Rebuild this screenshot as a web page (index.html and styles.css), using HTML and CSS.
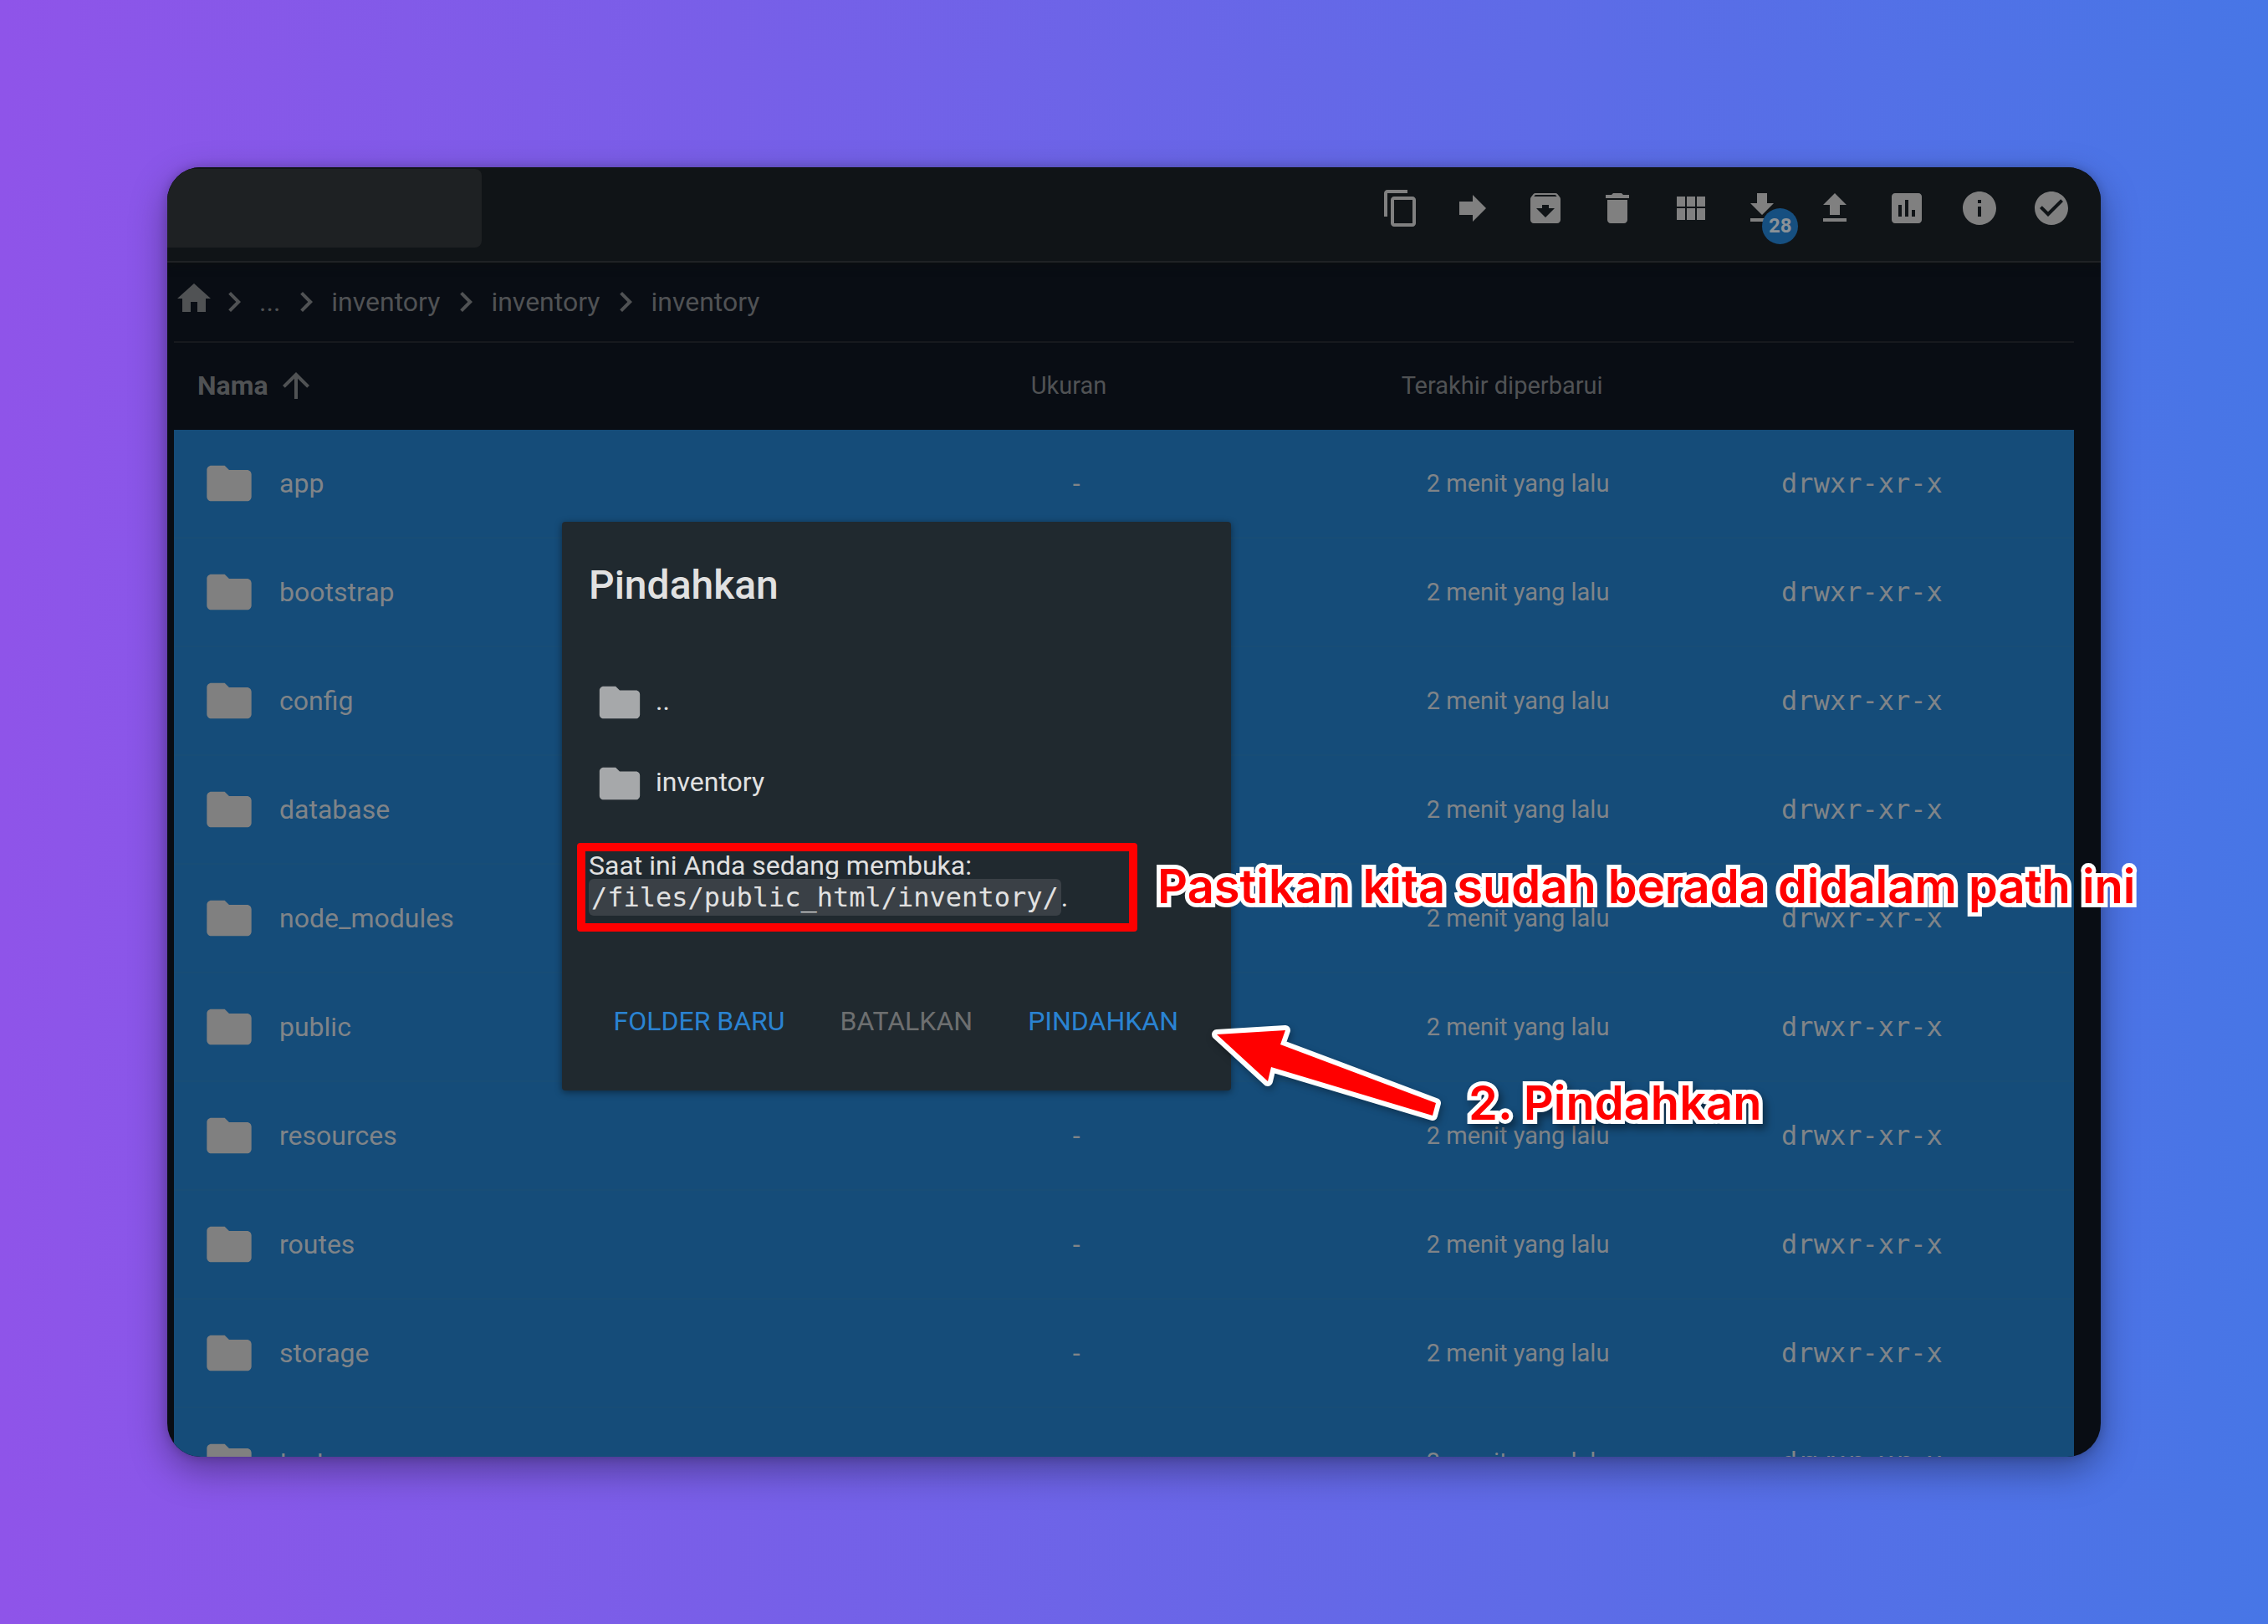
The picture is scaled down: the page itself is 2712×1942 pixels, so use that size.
FILE: index.html
```html
<!DOCTYPE html>
<html lang="id">
<head>
<meta charset="utf-8">
<title>Pindahkan</title>
<link rel="stylesheet" href="styles.css">
</head>
<body>
<svg class="sprite" aria-hidden="true">
  <symbol id="folder" viewBox="0 0 24 24"><path d="M10 4H4c-1.1 0-1.99.9-1.99 2L2 18c0 1.100.9 2 2 2h16c1.100 0 2-.9 2-2V8c0-1.100-.9-2-2-2h-8l-2-2z"/></symbol>
  <symbol id="chevron" viewBox="0 0 24 24"><path d="M10 6L8.59 7.410 13.170 12l-4.580 4.590L10 18l6-6z"/></symbol>
</svg>
<main class="stage">
  <section class="window">
    <header class="toolbar">
      <input class="search" type="text" aria-label="Cari">
      <nav class="actions">
        <button class="action" aria-label="Salin"><svg viewBox="0 0 24 24"><path d="M16 1H4c-1.100 0-2 .9-2 2v14h2V3h12V1zm3 4H8c-1.100 0-2 .9-2 2v14c0 1.100.9 2 2 2h11c1.100 0 2-.9 2-2V7c0-1.100-.9-2-2-2zm0 16H8V7h11v14z"/></svg></button>
        <button class="action" aria-label="Pindah"><svg viewBox="0 0 24 24"><path d="M12 8V4l8 8-8 8v-4H4V8z"/></svg></button>
        <button class="action" aria-label="Arsip"><svg viewBox="0 0 24 24"><path d="M20.540 5.230l-1.390-1.680C18.880 3.210 18.470 3 18 3H6c-.47 0-.88.21-1.160.55L3.460 5.230C3.170 5.570 3 6.020 3 6.500V19c0 1.100.9 2 2 2h14c1.100 0 2-.9 2-2V6.500c0-.48-.17-.93-.46-1.270zM12 17.500L6.500 12H10v-2h4v2h3.500L12 17.500zM5.120 5l.81-1h12l.94 1H5.120z"/></svg></button>
        <button class="action" aria-label="Hapus"><svg viewBox="0 0 24 24"><path d="M6 19c0 1.100.9 2 2 2h8c1.100 0 2-.9 2-2V7H6v12zM19 4h-3.500l-1-1h-5l-1 1H5v2h14V4z"/></svg></button>
        <button class="action" aria-label="Tampilan"><svg viewBox="0 0 24 24"><path d="M4 11h5V5H4v6zm0 8h5v-7H4v7zm6 0h5v-7h-5v7zm6 0h5v-7h-5v7zm-6-8h5V5h-5v6zm6-6v6h5V5h-5z"/></svg></button>
        <button class="action" aria-label="Unduh"><svg viewBox="0 0 24 24"><path d="M19 9h-4V3H9v6H5l7 7 7-7zM5 18v2h14v-2H5z"/></svg><span class="badge">28</span></button>
        <button class="action" aria-label="Unggah"><svg viewBox="0 0 24 24"><path d="M9 16h6v-6h4l-7-7-7 7h4zm-4 2h14v2H5z"/></svg></button>
        <button class="action" aria-label="Statistik"><svg viewBox="0 0 24 24"><path d="M19 3H5c-1.100 0-2 .9-2 2v14c0 1.100.9 2 2 2h14c1.100 0 2-.9 2-2V5c0-1.100-.9-2-2-2zM9 17H7v-7h2v7zm4 0h-2V7h2v10zm4 0h-2v-4h2v4z"/></svg></button>
        <button class="action" aria-label="Info"><svg viewBox="0 0 24 24"><path d="M12 2C6.480 2 2 6.480 2 12s4.480 10 10 10 10-4.480 10-10S17.520 2 12 2zm1 15h-2v-6h2v6zm0-8h-2V7h2v2z"/></svg></button>
        <button class="action" aria-label="Pilih"><svg viewBox="0 0 24 24"><path d="M12 2C6.480 2 2 6.480 2 12s4.480 10 10 10 10-4.480 10-10S17.520 2 12 2zm-2 15l-5-5 1.410-1.410L10 14.170l7.590-7.590L19 8l-9 9z"/></svg></button>
      </nav>
    </header>
    <div class="content">
      <nav class="breadcrumbs">
        <a class="home" href="#" aria-label="Beranda"><svg viewBox="0 0 24 24"><path d="M10 20v-6h4v6h5v-8h3L12 3 2 12h3v8z"/></svg></a>
        <svg><use href="#chevron"/></svg><a class="crumb" href="#">...</a>
        <svg><use href="#chevron"/></svg><a class="crumb" href="#">inventory</a>
        <svg><use href="#chevron"/></svg><a class="crumb" href="#">inventory</a>
        <svg><use href="#chevron"/></svg><a class="crumb" href="#">inventory</a>
      </nav>
      <table class="files">
        <thead>
          <tr>
            <th class="name"><span class="sort">Nama <svg viewBox="0 0 24 24"><path d="M4 12l1.410 1.410L11 7.830V20h2V7.830l5.580 5.590L20 12l-8-8-8 8z"/></svg></span></th>
            <th class="size">Ukuran</th>
            <th class="updated">Terakhir diperbarui</th>
            <th class="mode"></th>
          </tr>
        </thead>
        <tbody>
          <tr><td><span class="file"><svg><use href="#folder"/></svg>app</span></td><td class="size">-</td><td class="updated">2 menit yang lalu</td><td class="mode">drwxr-xr-x</td></tr>
          <tr><td><span class="file"><svg><use href="#folder"/></svg>bootstrap</span></td><td class="size">-</td><td class="updated">2 menit yang lalu</td><td class="mode">drwxr-xr-x</td></tr>
          <tr><td><span class="file"><svg><use href="#folder"/></svg>config</span></td><td class="size">-</td><td class="updated">2 menit yang lalu</td><td class="mode">drwxr-xr-x</td></tr>
          <tr><td><span class="file"><svg><use href="#folder"/></svg>database</span></td><td class="size">-</td><td class="updated">2 menit yang lalu</td><td class="mode">drwxr-xr-x</td></tr>
          <tr><td><span class="file"><svg><use href="#folder"/></svg>node_modules</span></td><td class="size">-</td><td class="updated">2 menit yang lalu</td><td class="mode">drwxr-xr-x</td></tr>
          <tr><td><span class="file"><svg><use href="#folder"/></svg>public</span></td><td class="size">-</td><td class="updated">2 menit yang lalu</td><td class="mode">drwxr-xr-x</td></tr>
          <tr><td><span class="file"><svg><use href="#folder"/></svg>resources</span></td><td class="size">-</td><td class="updated">2 menit yang lalu</td><td class="mode">drwxr-xr-x</td></tr>
          <tr><td><span class="file"><svg><use href="#folder"/></svg>routes</span></td><td class="size">-</td><td class="updated">2 menit yang lalu</td><td class="mode">drwxr-xr-x</td></tr>
          <tr><td><span class="file"><svg><use href="#folder"/></svg>storage</span></td><td class="size">-</td><td class="updated">2 menit yang lalu</td><td class="mode">drwxr-xr-x</td></tr>
          <tr><td><span class="file"><svg><use href="#folder"/></svg>tests</span></td><td class="size">-</td><td class="updated">2 menit yang lalu</td><td class="mode">drwxr-xr-x</td></tr>
        </tbody>
      </table>
    </div>
  </section>

  <section class="dialog" role="dialog" aria-labelledby="dialog-title">
    <h2 class="dialog-title" id="dialog-title">Pindahkan</h2>
    <ul class="folders">
      <li class="folder"><svg><use href="#folder"/></svg><span class="folder-name">..</span></li>
      <li class="folder"><svg><use href="#folder"/></svg><span class="folder-name">inventory</span></li>
    </ul>
    <p class="location">Saat ini Anda sedang membuka: <code>/files/public_html/inventory/</code>.</p>
    <div class="dialog-actions">
      <button class="flat">FOLDER BARU</button>
      <button class="flat muted">BATALKAN</button>
      <button class="flat">PINDAHKAN</button>
    </div>
    <div class="frame"></div>
    <p class="note note-path">Pastikan kita sudah berada didalam path ini</p>
    <svg class="arrow" viewBox="0 0 290 130"><path d="M15 17L97 12L91 29L277 99L273 114L80 56L76 73Z"/></svg>
    <p class="note note-move">2. Pindahkan</p>
  </section>
</main>
</body>
</html>
```
FILE: styles.css
```css
* {
  box-sizing: border-box;
}

body {
  margin: 0;
  background: linear-gradient(90deg, #8f54e9, #4776e6);
  font-family: Roboto, "Liberation Sans", sans-serif;
  font-size: 32px;
  color: #808488;
}

button {
  padding: 0;
  border: 0;
  background: none;
  font: inherit;
}

a {
  color: inherit;
  text-decoration: none;
}

svg {
  display: block;
  flex: none;
  fill: currentColor;
}

.sprite {
  position: absolute;
  width: 0;
  height: 0;
}

.stage {
  position: relative;
  height: 100vh;
  padding: 200px;
  overflow: hidden;
}

/* File manager window */

.window {
  height: 100%;
  overflow: hidden;
  border-radius: 40px;
  background: #090d14;
  box-shadow: 0 16px 44px rgba(0, 0, 0, 0.35), 0 0 12px rgba(0, 0, 0, 0.2);
}

.toolbar {
  display: flex;
  justify-content: space-between;
  height: 114px;
  padding: 2px 35px 16px 0;
  border-bottom: 2px solid #202225;
  background: #101417;
  box-shadow: 0 2px 10px #0c0f10;
}

.search {
  width: 376px;
  height: 94px;
  border: 0;
  border-radius: 0 8px 8px 0;
  background: #1e2123;
}

.actions {
  display: flex;
  align-items: center;
  justify-content: space-between;
  width: 826px;
}

.action {
  position: relative;
  width: 48px;
  height: 48px;
  color: #808080;
}

.action svg {
  width: 48px;
  height: 48px;
}

.badge {
  position: absolute;
  top: 24px;
  left: 24px;
  width: 43px;
  height: 43px;
  border-radius: 50%;
  background: #164f80;
  color: #8b9298;
  font-size: 24px;
  font-weight: 700;
  line-height: 43px;
  text-align: center;
}

.content {
  padding: 0 32px 0 8px;
}

.breadcrumbs {
  display: flex;
  align-items: center;
  height: 96px;
  border-bottom: 2px solid #17191e;
  color: #505254;
}

.breadcrumbs svg {
  width: 48px;
  height: 48px;
}

.home {
  padding-bottom: 8px;
}

.crumb {
  padding: 0 7px 0 6px;
}

.files {
  width: 100%;
  table-layout: fixed;
  border-collapse: separate;
  border-spacing: 0;
}

.files th {
  height: 104px;
  padding: 0 0 2px;
  color: #505254;
  font-size: 29px;
  font-weight: 400;
  text-align: left;
}

.files .name {
  width: 45.1%;
  padding-left: 28px;
  font-size: 32px;
  font-weight: 700;
}

th.size {
  width: 19.500%;
}

th.updated {
  width: 20%;
}

.sort {
  display: flex;
  align-items: center;
  gap: 9px;
}

.sort svg {
  width: 48px;
  height: 48px;
}

.files td {
  height: 130px;
  padding: 0;
  border-bottom: 2px solid #184d76;
  background: #154c79;
}

.file {
  display: flex;
  align-items: center;
  gap: 28px;
  padding-left: 34px;
}

.file svg {
  width: 64px;
  height: 64px;
  color: #808080;
}

.files td.size {
  padding-left: 50px;
}

.files td.updated {
  padding-left: 30px;
  font-size: 29px;
}

.files td.mode {
  font-family: "DejaVu Sans Mono", monospace;
}

/* Move dialog */

.dialog {
  position: absolute;
  top: 624px;
  left: 672px;
  width: 800px;
  padding: 47px 32px 43px;
  border-radius: 4px;
  background: #20292f;
  box-shadow: 0 2px 8px rgba(0, 0, 0, 0.45);
  color: #e1e1e1;
}

.dialog-title {
  margin: 0;
  font-size: 48px;
  font-weight: 500;
  line-height: 58px;
}

.folders {
  margin: 62px 0 0;
  padding: 0 0 0 8px;
  list-style: none;
}

.folder {
  display: flex;
  align-items: center;
  gap: 14px;
  height: 97px;
}

.folder svg {
  width: 58px;
  height: 58px;
  color: #a6a8aa;
}

.folder-name {
  padding-bottom: 4px;
}

.location {
  margin: 31px 0 0;
  line-height: 38px;
}

.location code {
  padding: 3px;
  border-radius: 6px;
  background: #3a4046;
  font-family: "DejaVu Sans Mono", monospace;
}

.dialog-actions {
  display: flex;
  justify-content: flex-end;
  gap: 4px;
  margin-top: 89px;
}

.flat {
  height: 80px;
  padding: 0 31px;
  color: #2a83d2;
  white-space: nowrap;
}

.muted {
  color: #6d6f70;
}

/* Annotations over the dialog */

.frame {
  position: absolute;
  top: 384px;
  left: 18px;
  width: 670px;
  height: 106px;
  border: 10px solid #ff0000;
  border-radius: 4px;
}

.note {
  position: absolute;
  margin: 0;
  color: #ff0000;
  font-family: Inter, sans-serif;
  font-size: 56px;
  font-weight: 600;
  line-height: 70px;
  white-space: nowrap;
  paint-order: stroke fill;
  -webkit-text-stroke: 10px #ffffff;
}

.note-path {
  top: 401px;
  left: 712px;
}

.note-move {
  top: 660px;
  left: 1084px;
  filter: drop-shadow(4px 6px 5px rgba(0, 0, 0, 0.4));
}

.arrow {
  position: absolute;
  top: 596px;
  left: 768px;
  width: 290px;
  height: 130px;
  overflow: visible;
  fill: #ff0000;
  stroke: #ffffff;
  stroke-width: 12px;
  stroke-linejoin: round;
  paint-order: stroke fill;
  filter: drop-shadow(2px 4px 4px rgba(0, 0, 0, 0.3));
}
```
